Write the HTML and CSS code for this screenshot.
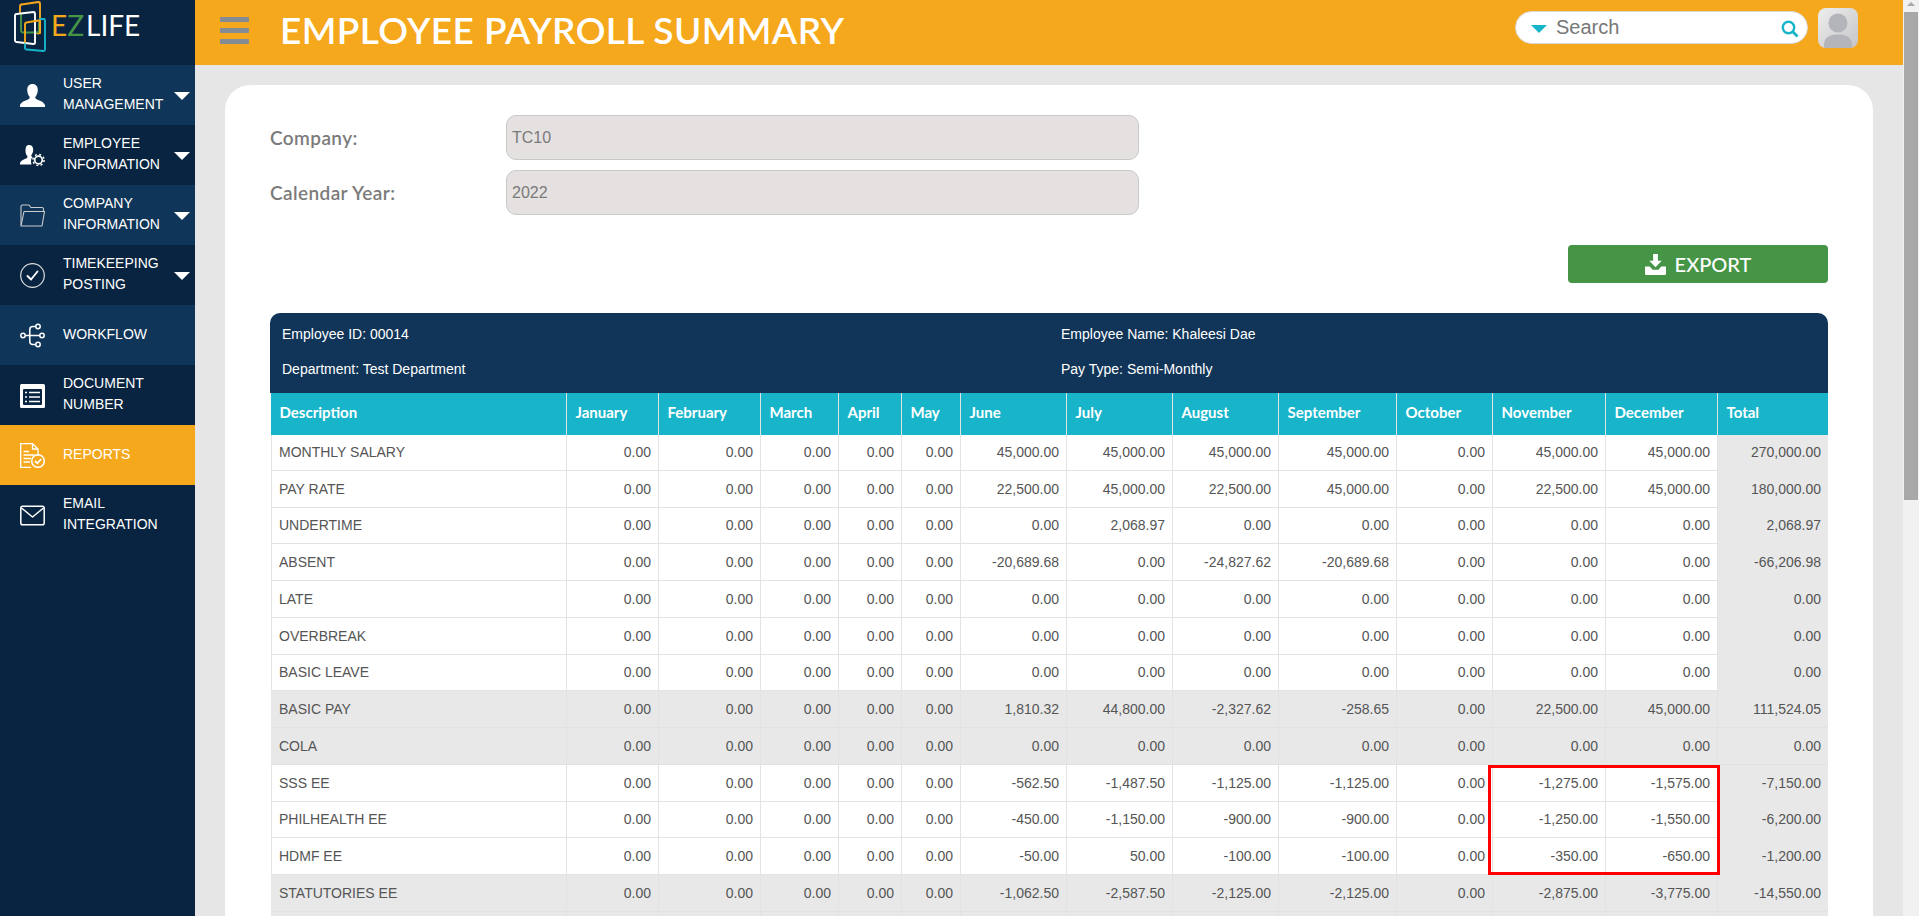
FILE: index.html
```html
<!DOCTYPE html>
<html lang="en">
<head>
<meta charset="utf-8">
<title>Employee Payroll Summary</title>
<link rel="stylesheet" href="styles.css">
</head>
<body>
<div class="app">
  <aside class="sidebar">
    <div class="brand">
      <svg class="brand-mark" width="48" height="54" viewBox="0 0 48 54" fill="none" stroke-width="1.900" stroke-linejoin="round" stroke-linecap="round">
        <path d="M21.500 4.500 38.500 2c1 0 1.500.5 1.500 1.500V32c0 1-.5 1.500-1.500 1.500L36 33" stroke="#f5a81c"/>
        <path d="M21.500 4.500c-1 .2-1.500.7-1.500 1.500v6" stroke="#f5a81c"/>
        <path d="M21 15v15c0 1.500.5 2.500 2 2.500h13c2 0 3-1 3-2.500v-7" stroke="#469547"/>
        <path d="M16.500 14 33.500 12c1 0 1.500.5 1.500 1.500V43c0 .8-.5 1-1.500 1l-17-2c-1 0-1.500-.5-1.500-1.500V15.500c0-1 .5-1.500 1.500-1.500z" stroke="#fff"/>
        <path d="M26.500 22.500 38 20.500c1 0 2 .5 2 1.500V33M26.500 22.500c-1 .2-1.500.7-1.500 1.500v18" stroke="#f5a81c"/>
        <path d="M40 19h3.500c1 0 1.500.5 1.500 1.500v29c0 1-.5 1.500-1.500 1.500L26.500 49.500c-1 0-1.500-.5-1.500-1.500v-4" stroke="#18b5ca"/>
      </svg>
      <span class="brand-name"><span class="brand-e">E</span><span class="brand-z">Z</span><span class="brand-life">LIFE</span></span>
    </div>
    <nav class="nav">
      <a class="nav-item alt">
        <svg class="nav-icon" viewBox="0 0 25 25"><path fill="#fff" d="M12.500 1c3.500 0 5.300 2.500 5.300 6 0 3-1.200 5.300-2.300 6.800-.7 1 0 2 1.500 2.700 3 1.200 7 2.400 8 5.800V24H0v-1.700c1-3.400 5-4.600 8-5.800 1.500-.7 2.200-1.700 1.500-2.700C8.400 12.300 7.200 10 7.200 7c0-3.500 1.800-6 5.300-6z"/></svg>
        <span class="nav-label">USER<br>MANAGEMENT</span><span class="caret"></span>
      </a>
      <a class="nav-item">
        <svg class="nav-icon" viewBox="0 0 25 25"><path fill="#fff" d="M9 2c2.800 0 4.200 2 4.200 4.700 0 2.300-.9 4.100-1.800 5.300-.5.800 0 1.500 1 2-.9 1.300-1.400 2.800-1.400 4.500 0 1 .2 2 .6 3H0v-1.500c.7-2.700 3.800-3.600 6.200-4.600 1.100-.5 1.700-1.300 1.100-2.100-.9-1.200-1.800-3-1.800-5.300C5.500 4 6.300 2 9 2z"/><circle cx="18.500" cy="17" r="3.800" fill="none" stroke="#fff" stroke-width="1.700"/><circle cx="18.500" cy="17" r="5.600" fill="none" stroke="#fff" stroke-width="1.500" stroke-dasharray="2 2.400"/></svg>
        <span class="nav-label">EMPLOYEE<br>INFORMATION</span><span class="caret"></span>
      </a>
      <a class="nav-item alt">
        <svg class="nav-icon" viewBox="0 0 25 25" fill="none" stroke="#ccc" stroke-width="1.100" stroke-linejoin="round"><path d="M1 22V3.500C1 2.500 1.500 2 2.500 2H9l2 2.500h11c1 0 1.500.5 1.500 1.500v2.500"/><path d="M1 23 4 8.500h20.500L22 23z"/></svg>
        <span class="nav-label">COMPANY<br>INFORMATION</span><span class="caret"></span>
      </a>
      <a class="nav-item">
        <svg class="nav-icon" viewBox="0 0 25 25" fill="none"><circle cx="12.500" cy="12.500" r="11.800" stroke="#ddd" stroke-width="1.200"/><path d="M7.500 13l3.500 3.500 6.500-8" stroke="#fff" stroke-width="1.900" stroke-linecap="round" stroke-linejoin="round"/></svg>
        <span class="nav-label">TIMEKEEPING<br>POSTING</span><span class="caret"></span>
      </a>
      <a class="nav-item alt">
        <svg class="nav-icon" viewBox="0 0 25 25" fill="none" stroke="#fff" stroke-width="1.500"><circle cx="3" cy="12.500" r="2.200"/><circle cx="18" cy="3.500" r="2.200"/><circle cx="22" cy="12.500" r="2.200"/><circle cx="18" cy="21.500" r="2.200"/><path d="M5.200 12.500h14.600M15.800 3.500h-3c-2 0-3 1-3 3v12c0 2 1 3 3 3h3"/></svg>
        <span class="nav-label">WORKFLOW</span>
      </a>
      <a class="nav-item">
        <svg class="nav-icon" viewBox="0 0 25 25"><rect y="1" width="25" height="24" rx="1.500" fill="#fff"/><rect x="3" y="6" width="19" height="16" rx="1" fill="#082441"/><path d="M5 9.500h2M9 9.500h11M5 14h2M9 14h11M5 18.500h2M9 18.500h11" stroke="#fff" stroke-width="1.500"/></svg>
        <span class="nav-label">DOCUMENT<br>NUMBER</span>
      </a>
      <a class="nav-item active">
        <svg class="nav-icon" viewBox="0 0 25 25" fill="none" stroke="#fff" stroke-width="1.300"><path d="M11 24.300H.7V.7h11.800L18 6v7"/><path d="M12.500.7V6H18"/><path d="M3.500 8.500H9M3.500 12h11M3.500 15.500H11M3.500 19H10"/><circle cx="18" cy="18" r="6.300" stroke-width="1.500"/><path d="M15 18l2.300 2.300 4-4.300" stroke-width="1.800"/></svg>
        <span class="nav-label">REPORTS</span>
      </a>
      <a class="nav-item">
        <svg class="nav-icon" viewBox="0 0 25 25" fill="none" stroke="#fff" stroke-width="1.500" stroke-linejoin="round"><rect x=".8" y="3.300" width="23.400" height="18.400" rx="1.800"/><path d="M1.500 5 12.500 14 23.500 5"/></svg>
        <span class="nav-label">EMAIL<br>INTEGRATION</span>
      </a>
    </nav>
  </aside>

  <div class="main">
    <header class="topbar">
      <div class="burger"><span></span><span></span><span></span></div>
      <h1 class="title">EMPLOYEE PAYROLL SUMMARY</h1>
      <div class="search">
        <span class="search-caret"></span>
        <span class="search-text">Search</span>
        <svg class="search-icon" width="18" height="18" viewBox="0 0 18 18" fill="none" stroke="#18b5ca"><circle cx="7.500" cy="7.500" r="5.700" stroke-width="2.400"/><path d="M11.500 11.500l5 5" stroke-width="2.800"/></svg>
      </div>
      <div class="avatar">
        <svg width="40" height="40" viewBox="0 0 40 40"><circle cx="20" cy="15" r="9.500" fill="#b4b5ba"/><path d="M6 40v-3c0-8 6-10.500 14-10.500S34 29 34 37v3z" fill="#b4b5ba"/></svg>
      </div>
    </header>

    <section class="content">
      <div class="card">
        <form class="filters">
          <div class="field"><label class="field-label">Company:</label><div class="field-value">TC10</div></div>
          <div class="field"><label class="field-label">Calendar Year:</label><div class="field-value">2022</div></div>
        </form>

        <div class="actions">
          <button class="export" type="button">
            <svg width="21" height="21" viewBox="0 0 22 22" fill="#fff"><path d="M8.500 0h5v7h4L11 14 4.500 7h4z"/><path d="M0 13h5l3 3.500h6l3-3.500h5v8c0 .5-.5 1-1 1H1c-.5 0-1-.5-1-1z"/></svg>
            <span>EXPORT</span>
          </button>
        </div>

        <div class="report">
          <div class="emp-info">
            <div>Employee ID: 00014</div><div>Employee Name: Khaleesi Dae</div>
            <div>Department: Test Department</div><div>Pay Type: Semi-Monthly</div>
          </div>
          <table class="payroll">
            <colgroup>
              <col class="c-desc"><col class="c-jan"><col class="c-feb"><col class="c-mar"><col class="c-apr"><col class="c-may"><col class="c-jun"><col class="c-jul"><col class="c-aug"><col class="c-sep"><col class="c-oct"><col class="c-nov"><col class="c-dec"><col class="c-tot">
            </colgroup>
            <thead>
              <tr><th>Description</th><th>January</th><th>February</th><th>March</th><th>April</th><th>May</th><th>June</th><th>July</th><th>August</th><th>September</th><th>October</th><th>November</th><th>December</th><th>Total</th></tr>
            </thead>
            <tbody>
              <tr><td>MONTHLY SALARY</td><td>0.00</td><td>0.00</td><td>0.00</td><td>0.00</td><td>0.00</td><td>45,000.00</td><td>45,000.00</td><td>45,000.00</td><td>45,000.00</td><td>0.00</td><td>45,000.00</td><td>45,000.00</td><td>270,000.00</td></tr>
              <tr><td>PAY RATE</td><td>0.00</td><td>0.00</td><td>0.00</td><td>0.00</td><td>0.00</td><td>22,500.00</td><td>45,000.00</td><td>22,500.00</td><td>45,000.00</td><td>0.00</td><td>22,500.00</td><td>45,000.00</td><td>180,000.00</td></tr>
              <tr><td>UNDERTIME</td><td>0.00</td><td>0.00</td><td>0.00</td><td>0.00</td><td>0.00</td><td>0.00</td><td>2,068.97</td><td>0.00</td><td>0.00</td><td>0.00</td><td>0.00</td><td>0.00</td><td>2,068.97</td></tr>
              <tr><td>ABSENT</td><td>0.00</td><td>0.00</td><td>0.00</td><td>0.00</td><td>0.00</td><td>-20,689.68</td><td>0.00</td><td>-24,827.62</td><td>-20,689.68</td><td>0.00</td><td>0.00</td><td>0.00</td><td>-66,206.98</td></tr>
              <tr><td>LATE</td><td>0.00</td><td>0.00</td><td>0.00</td><td>0.00</td><td>0.00</td><td>0.00</td><td>0.00</td><td>0.00</td><td>0.00</td><td>0.00</td><td>0.00</td><td>0.00</td><td>0.00</td></tr>
              <tr><td>OVERBREAK</td><td>0.00</td><td>0.00</td><td>0.00</td><td>0.00</td><td>0.00</td><td>0.00</td><td>0.00</td><td>0.00</td><td>0.00</td><td>0.00</td><td>0.00</td><td>0.00</td><td>0.00</td></tr>
              <tr><td>BASIC LEAVE</td><td>0.00</td><td>0.00</td><td>0.00</td><td>0.00</td><td>0.00</td><td>0.00</td><td>0.00</td><td>0.00</td><td>0.00</td><td>0.00</td><td>0.00</td><td>0.00</td><td>0.00</td></tr>
              <tr class="sum"><td>BASIC PAY</td><td>0.00</td><td>0.00</td><td>0.00</td><td>0.00</td><td>0.00</td><td>1,810.32</td><td>44,800.00</td><td>-2,327.62</td><td>-258.65</td><td>0.00</td><td>22,500.00</td><td>45,000.00</td><td>111,524.05</td></tr>
              <tr class="sum"><td>COLA</td><td>0.00</td><td>0.00</td><td>0.00</td><td>0.00</td><td>0.00</td><td>0.00</td><td>0.00</td><td>0.00</td><td>0.00</td><td>0.00</td><td>0.00</td><td>0.00</td><td>0.00</td></tr>
              <tr><td>SSS EE</td><td>0.00</td><td>0.00</td><td>0.00</td><td>0.00</td><td>0.00</td><td>-562.50</td><td>-1,487.50</td><td>-1,125.00</td><td>-1,125.00</td><td>0.00</td><td>-1,275.00</td><td>-1,575.00</td><td>-7,150.00</td></tr>
              <tr><td>PHILHEALTH EE</td><td>0.00</td><td>0.00</td><td>0.00</td><td>0.00</td><td>0.00</td><td>-450.00</td><td>-1,150.00</td><td>-900.00</td><td>-900.00</td><td>0.00</td><td>-1,250.00</td><td>-1,550.00</td><td>-6,200.00</td></tr>
              <tr><td>HDMF EE</td><td>0.00</td><td>0.00</td><td>0.00</td><td>0.00</td><td>0.00</td><td>-50.00</td><td>50.00</td><td>-100.00</td><td>-100.00</td><td>0.00</td><td>-350.00</td><td>-650.00</td><td>-1,200.00</td></tr>
              <tr class="sum"><td>STATUTORIES EE</td><td>0.00</td><td>0.00</td><td>0.00</td><td>0.00</td><td>0.00</td><td>-1,062.50</td><td>-2,587.50</td><td>-2,125.00</td><td>-2,125.00</td><td>0.00</td><td>-2,875.00</td><td>-3,775.00</td><td>-14,550.00</td></tr>
              <tr class="sum"><td></td><td></td><td></td><td></td><td></td><td></td><td></td><td></td><td></td><td></td><td></td><td></td><td></td><td></td></tr>
            </tbody>
          </table>
          <div class="highlight"></div>
        </div>
      </div>
    </section>
  </div>

  <div class="scrollbar">
    <span class="scroll-arrow"></span>
    <span class="scroll-thumb"></span>
  </div>
</div>
</body>
</html>
```
FILE: styles.css
```css
* { box-sizing: border-box; }
html, body { margin: 0; height: 100%; overflow: hidden; }
body { font-family: "Liberation Sans", Arial, sans-serif; font-size: 14px; color: #555; }

.app { display: flex; height: 916px; }

/* Sidebar */
.sidebar { width: 195px; flex: none; background: #082441; }
.brand { height: 65px; display: flex; align-items: flex-start; }
.brand-mark { flex: none; }
.brand-name { font-family: Lato, sans-serif; font-size: 28px; line-height: 1; margin: 11px 0 0 3px; }
.brand-e { color: #f5a81c; }
.brand-z { color: #469547; margin-right: 2px; }
.brand-life { color: #fff; }

.nav-item { height: 60px; display: flex; align-items: center; padding-left: 20px; color: #fff; line-height: 21px; position: relative; }
.nav-item.alt { background: #0f3558; }
.nav-item.active { background: #f5a81c; }
.nav-icon { width: 25px; height: 25px; flex: none; margin-right: 18px; }
.nav-label { margin-top: -2px; white-space: nowrap; }
.caret { position: absolute; right: 5px; top: 27px; border-style: solid; border-width: 8px 8px 0; border-color: #fff transparent transparent; }

/* Main column */
.main { width: 1708px; flex: none; display: flex; flex-direction: column; background: #e6e6e6; overflow: hidden; }
.topbar { height: 65px; flex: none; background: #f6a81c; display: flex; align-items: center; padding-left: 25px; }
.burger { width: 29px; display: flex; flex-direction: column; gap: 6px; margin-top: -5px; }
.burger span { height: 5px; border-radius: 1px; background: #858b93; }
.title { margin: -6px 0 0 31px; font-family: Lato, sans-serif; font-weight: 600; font-size: 37px; line-height: 1; letter-spacing: .4px; color: #fff; white-space: nowrap; flex: 1; }
.search { width: 293px; height: 33px; background: #fff; border: 1px solid #d8d8d8; border-radius: 17px; display: flex; align-items: center; padding: 0 8px 0 15px; margin-top: -10px; }
.search-caret { border-style: solid; border-width: 8px 8px 0; border-color: #18b5ca transparent transparent; margin-top: 2px; }
.search-text { font-size: 20px; color: #777; margin-left: 9px; flex: 1; }
.search-icon { margin-top: 2px; }
.avatar { width: 40px; height: 40px; margin: -10px 45px 0 10px; border-radius: 8px; overflow: hidden; background: linear-gradient(135deg, #eeeeee, #c5c5c8); line-height: 0; }

.content { flex: 1; padding: 20px 30px 0; min-height: 0; }
.card { background: #fff; border-radius: 25px 25px 0 0; padding: 30px 45px 0; height: 900px; }

/* Filters */
.filters { display: flex; flex-direction: column; gap: 10px; }
.field { display: flex; align-items: center; }
.field-label { width: 236px; font-family: Lato, sans-serif; font-weight: 600; font-size: 19px; letter-spacing: .4px; color: #7b7b7b; }
.field-value { width: 633px; height: 45px; background: #e5e1e1; border: 1px solid #c9c9c9; border-radius: 10px; font-size: 16px; color: #7a7a7a; display: flex; align-items: center; padding: 0 5px; }

.actions { display: flex; justify-content: flex-end; margin-top: 30px; }
.export { width: 260px; height: 38px; border: 0; border-radius: 4px; background: #469547; color: #fff; font-family: Lato, sans-serif; font-weight: 500; font-size: 20px; display: flex; align-items: center; justify-content: center; gap: 9px; padding: 0; }

/* Report */
.report { margin-top: 30px; position: relative; }
.emp-info { height: 80px; background: #103558; border-radius: 10px 10px 0 0; color: #fff; font-size: 14px; display: grid; grid-template-columns: 779px 1fr; grid-auto-rows: 35px; padding: 3px 0 7px 12px; align-items: center; }

.payroll { width: 1557px; margin-left: 1px; table-layout: fixed; border-collapse: separate; border-spacing: 0; font-size: 14px; }
.c-desc { width: 296px; }
.c-jan { width: 92px; }
.c-feb { width: 102px; }
.c-mar { width: 78px; }
.c-apr { width: 63px; }
.c-may { width: 59px; }
.c-jun { width: 106px; }
.c-jul { width: 106px; }
.c-aug { width: 106px; }
.c-sep { width: 118px; }
.c-oct { width: 96px; }
.c-nov { width: 113px; }
.c-dec { width: 112px; }
.c-tot { width: 110px; }

.payroll th { height: 42px; background: #18b5ca; color: #fff; font-family: Lato, sans-serif; font-weight: 700; font-size: 15px; text-align: left; padding: 0 8px 5px 8.500px; border-right: 1px solid #dfe3e3; white-space: nowrap; }
.payroll th:last-child { border-right: 0; }
.payroll tbody tr { height: 36.750px; }
.payroll tbody tr:first-child { height: 35.750px; }
.payroll td { padding: 0 7px 0 8px; text-align: right; border-right: 1px solid #e3e3e3; border-bottom: 1px solid #e3e3e3; white-space: nowrap; color: #555; }
.payroll td:first-child { text-align: left; border-left: 1px solid #e3e3e3; padding-left: 7px; }
.payroll td:last-child { background: #e8e8e8; border-right: 0; border-bottom-color: #e8e8e8; }
.payroll tr.sum td { background: #e8e8e8; border-color: #e2e2e2; }
.payroll tr.sum td:first-child { border-left-color: #e8e8e8; }

.highlight { position: absolute; left: 1218px; top: 452px; width: 232px; height: 110px; border: 3px solid #f00; }

/* Fake browser scrollbar */
.scrollbar { width: 16px; flex: none; background: #f1f1f1; position: relative; display: flex; flex-direction: column; align-items: flex-end; }
.scroll-arrow { margin: 2px 4px 0 0; border-style: solid; border-width: 0 4px 4px; border-color: transparent transparent #a8a8a8; }
.scroll-thumb { width: 14px; height: 488px; margin: 6px 1px 0 0; background: #a8a8a8; }
```
